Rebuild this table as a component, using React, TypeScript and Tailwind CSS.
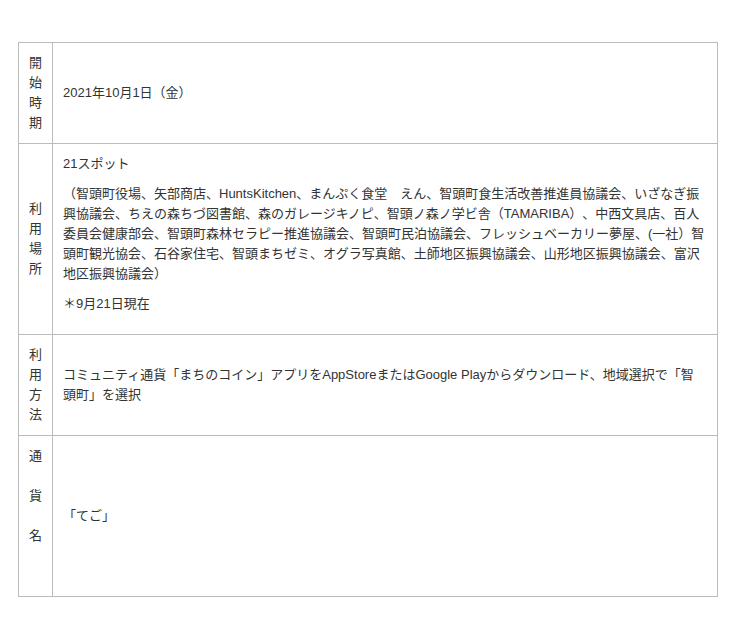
import React from "react";

const font = {
  fontFamily: '"Liberation Sans", "Noto Sans CJK JP", sans-serif',
};

function Header({ chars }: { chars: string[] }) {
  return (
    <div className="flex flex-col items-center justify-center border-r border-b border-[#bcbcbc] py-[10px]">
      {chars.map((c, i) => (
        <div key={i} className="h-[20px] leading-[20px]">
          {c}
        </div>
      ))}
    </div>
  );
}

export default function App() {
  return (
    <div className="bg-white min-h-[637px] pt-[42px] pl-[18px]" style={font}>
      <div className="w-[700px] border-l border-t border-[#bcbcbc] text-[13px] leading-[20px] text-[#333333] [text-spacing-trim:space-all]">
        <div className="grid grid-cols-[34px_665px]">
          <Header chars={["開", "始", "時", "期"]} />
          <div className="flex items-center border-r border-b border-[#bcbcbc] px-[10px] py-[10px]">
            2021年10月1日（金）
          </div>
        </div>
        <div className="grid grid-cols-[34px_665px]">
          <Header chars={["利", "用", "場", "所"]} />
          <div className="border-r border-b border-[#bcbcbc] px-[10px] py-[10px]">
            <p className="mb-[10px]">21スポット</p>
            <p className="mb-[10px]">
              （智頭町役場、矢部商店、HuntsKitchen、まんぷく食堂　えん、智頭町食生活改善推進員協議会、いざなぎ振興協議会、ちえの森ちづ図書館、森のガレージキノピ、智頭ノ森ノ学ビ舎（TAMARIBA）、中西文具店、百人委員会健康部会、智頭町森林セラピー推進協議会、智頭町民泊協議会、フレッシュベーカリー夢屋、(一社）智頭町観光協会、石谷家住宅、智頭まちゼミ、オグラ写真館、土師地区振興協議会、山形地区振興協議会、富沢地区振興協議会）
            </p>
            <p className="mb-[10px]">＊9月21日現在</p>
          </div>
        </div>
        <div className="grid grid-cols-[34px_665px]">
          <Header chars={["利", "用", "方", "法"]} />
          <div className="flex items-center border-r border-b border-[#bcbcbc] px-[10px] py-[10px]">
            <p>
              コミュニティ通貨「まちのコイン」アプリをAppStoreまたはGoogle Playからダウンロード、地域選択で「智
              <br />
              頭町」を選択
            </p>
          </div>
        </div>
        <div className="grid grid-cols-[34px_665px]">
          <Header chars={["通", "", "貨", "", "名", "", ""]} />
          <div className="flex items-center border-r border-b border-[#bcbcbc] px-[10px] py-[10px]">
            「てご」
          </div>
        </div>
      </div>
    </div>
  );
}
